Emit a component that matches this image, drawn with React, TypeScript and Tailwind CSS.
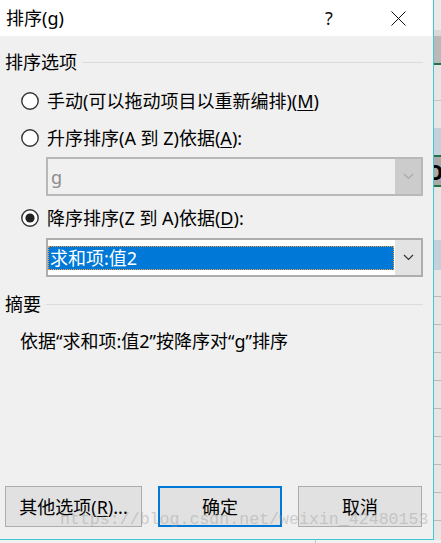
import React from 'react';

const font = { fontFamily: '"Noto Sans", "Noto Sans CJK SC", sans-serif' };

const Chevron: React.FC<{ color: string }> = ({ color }) => (
  <svg width="11" height="7" viewBox="0 0 11 7" fill="none">
    <polyline points="1,1 5.5,5.5 10,1" stroke={color} strokeWidth="1.2" />
  </svg>
);

const RadioIcon: React.FC<{ checked?: boolean }> = ({ checked }) => (
  <svg width="18" height="18" viewBox="0 0 18 18" className="shrink-0">
    <circle cx="9" cy="9" r="8.2" fill="#ffffff" stroke="#333333" strokeWidth="1.4" />
    {checked && <circle cx="9" cy="9" r="4.6" fill="#222222" />}
  </svg>
);

const SectionHeader: React.FC<{ label: string; className?: string }> = ({ label, className }) => (
  <div className={`flex items-center h-[26px] pl-[5px] gap-[5px] ${className ?? ''}`}>
    <span className="text-[18px] leading-none text-black whitespace-nowrap">{label}</span>
    <div className="flex-1 h-px bg-[#dcdcdc]" />
  </div>
);

const Radio: React.FC<{ checked?: boolean; className?: string; children: React.ReactNode }> = ({
  checked,
  className,
  children,
}) => (
  <div className={`flex items-center h-[26px] pl-[21px] gap-[8px] ${className ?? ''}`}>
    <RadioIcon checked={checked} />
    <span className="text-[18px] leading-none text-black whitespace-nowrap">{children}</span>
  </div>
);

const App: React.FC = () => {
  return (
    <div className="relative w-[441px] h-[543px] overflow-hidden bg-[#f0f0f0] flex flex-col" style={font}>
      <div className="flex h-[540px]">
        {/* dialog */}
        <div className="w-[434px] h-[540px] flex flex-col border-r border-b border-[#44c6cf]">
          <div className="h-[36px] bg-white flex items-center shrink-0">
            <span className="pl-[6px] text-[18px] leading-none text-black">排序(g)</span>
            <div className="ml-auto flex items-center gap-[23px] pr-[12px]">
              <div className="w-[46px] flex justify-center text-[18px] leading-none text-[#111]">?</div>
              <div className="w-[46px] flex justify-center">
                <svg width="15" height="15" viewBox="0 0 15 15">
                  <path d="M0.5 0.5 L14.5 14.5 M14.5 0.5 L0.5 14.5" stroke="#111" strokeWidth="1" />
                </svg>
              </div>
            </div>
          </div>

          <div className="flex-1 flex flex-col pt-[13px] pr-[10px] pb-[12px]">
            <SectionHeader label="排序选项" />

            <Radio className="mt-[13px]">
              手动(可以拖动项目以重新编排)(<span className="underline underline-offset-2">M</span>)
            </Radio>
            <Radio className="mt-[11px]">
              升序排序(A 到 Z)依据(<span className="underline underline-offset-2">A</span>):
            </Radio>

            <div className="ml-[46px] mt-[6px] h-[39px] border-2 border-[#b8b8b8] bg-[#f0f0f0] flex">
              <div className="flex-1 flex items-center pl-[3px] text-[18px] leading-none text-[#8c8c8c]">g</div>
              <div className="w-[26px] bg-[#cccccc] flex items-center justify-center">
                <Chevron color="#a8a8a8" />
              </div>
            </div>

            <Radio checked className="mt-[9px]">
              降序排序(Z 到 A)依据(<span className="underline underline-offset-2">D</span>):
            </Radio>

            <div className="ml-[46px] mt-[7px] h-[39px] border-2 border-[#adadad] bg-white flex">
              <div className="flex-1 flex items-center">
                <div className="w-full h-[24px] bg-[#0078d7] border border-dotted border-[#f5a142] flex items-center pl-[1px] text-[18px] leading-none text-white">
                  求和项:值2
                </div>
              </div>
              <div className="w-[26px] ml-px bg-[#e3e3e3] flex items-center justify-center">
                <Chevron color="#333333" />
              </div>
            </div>

            <SectionHeader label="摘要" className="mt-[14px]" />

            <div className="mt-[11px] h-[26px] flex items-center pl-[20px] text-[18px] leading-none text-black whitespace-nowrap">
              依据“求和项:值2”按降序对“g”排序
            </div>

            <div className="mt-auto flex pl-[5px] gap-[16px]">
              <button className="w-[137px] h-[41px] border border-[#adadad] bg-[#e1e1e1] text-[18px] leading-none text-black">
                其他选项(<span className="underline underline-offset-2">R</span>)...
              </button>
              <button className="w-[124px] h-[41px] border-2 border-[#0078d7] bg-[#e1e1e1] text-[18px] leading-none text-black">
                确定
              </button>
              <button className="w-[124px] h-[41px] border border-[#adadad] bg-[#e1e1e1] text-[18px] leading-none text-black">
                取消
              </button>
            </div>
          </div>
        </div>

        {/* excel background strip */}
        <div className="flex-1 flex flex-col overflow-hidden">
          <div className="h-[30px] shrink-0 bg-[#e9e9e9]" />
          <div className="h-[6px] shrink-0 bg-[#d9d9d9]" />
          <div className="h-[27px] shrink-0 bg-[#b9b9b9]" />
          <div className="h-[2px] shrink-0 bg-[#217346]" />
          <div className="h-[35px] shrink-0 bg-[#e6e6e6]" />
          <div className="h-px shrink-0 bg-[#c6c6c6]" />
          <div className="h-[27px] shrink-0 bg-[#e6e6e6]" />
          <div className="h-[27px] shrink-0 bg-[#c4d0dc]" />
          <div className="h-[2px] shrink-0 bg-[#217346]" />
          <div className="h-[28px] shrink-0 bg-[#a9a9a9] overflow-hidden flex items-center">
            <span className="-ml-[8px] text-[22px] font-bold leading-none text-black">O</span>
          </div>
          <div className="h-[2px] shrink-0 bg-[#217346]" />
          <div className="h-[53px] shrink-0 bg-[#e6e6e6]" />
          <div className="h-[30px] shrink-0 bg-[#c4d0dc]" />
          <div className="h-[27px] shrink-0 bg-[#e6e6e6] border-b border-[#b9b9b9]" />
          <div className="h-[28px] shrink-0 bg-[#e6e6e6] border-b border-[#b9b9b9]" />
          <div className="h-[28px] shrink-0 bg-[#e6e6e6] border-b border-[#b9b9b9]" />
          <div className="h-[28px] shrink-0 bg-[#e6e6e6] border-b border-[#b9b9b9]" />
          <div className="h-[28px] shrink-0 bg-[#e6e6e6] border-b border-[#b9b9b9]" />
          <div className="h-[28px] shrink-0 bg-[#e6e6e6] border-b border-[#b9b9b9]" />
          <div className="h-[28px] shrink-0 bg-[#e6e6e6] border-b border-[#b9b9b9]" />
          <div className="h-[28px] shrink-0 bg-[#e6e6e6] border-b border-[#b9b9b9]" />
          <div className="h-[28px] shrink-0 bg-[#e6e6e6] border-b border-[#b9b9b9]" />
          <div className="h-[28px] shrink-0 bg-[#e6e6e6] border-b border-[#b9b9b9]" />
        </div>
      </div>
      <div className="flex-1 bg-[#f0f0f0] flex">
        <div className="ml-[315px] w-px bg-[#c6c6c6]" />
      </div>

      {/* watermark */}
      <div
        className="absolute left-[60px] top-[512px] pointer-events-none text-[16.6px] leading-none text-[#9a9a9a] opacity-40 whitespace-nowrap"
        style={{ fontFamily: '"Liberation Mono", monospace' }}
      >
        https://blog.csdn.net/weixin_42480153
      </div>
    </div>
  );
};

export default App;
